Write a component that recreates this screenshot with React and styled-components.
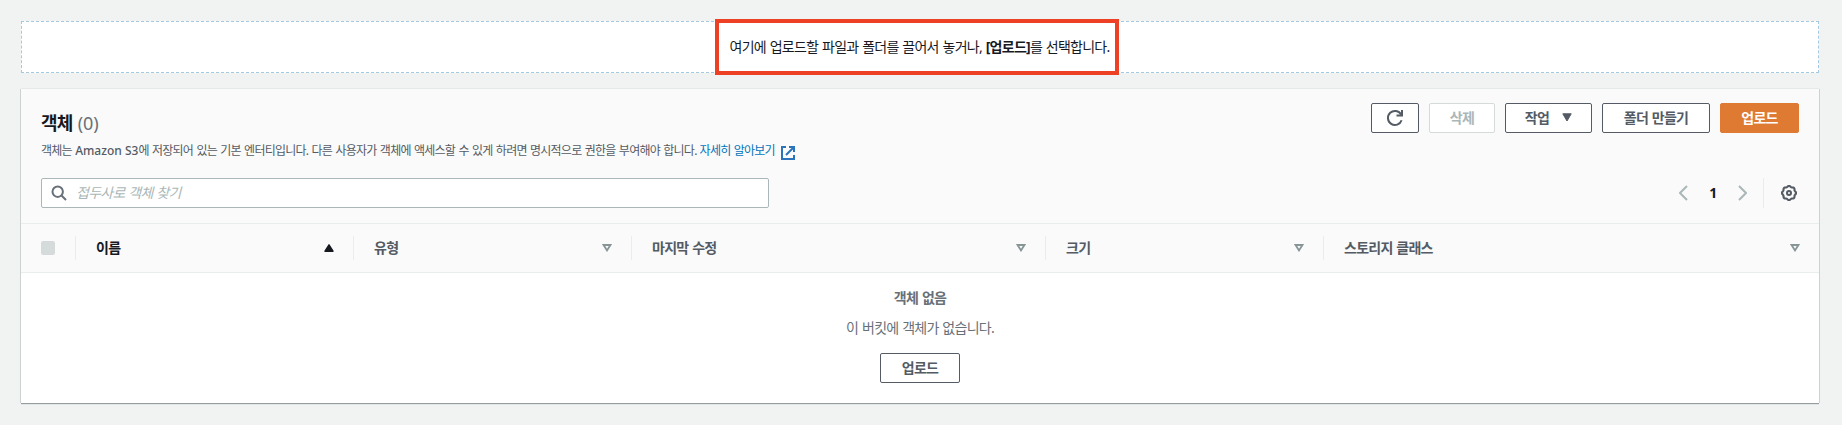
import React from "react";
import styled, { createGlobalStyle } from "styled-components";

const GlobalStyle = createGlobalStyle`
  *, *::before, *::after { box-sizing: border-box; }
  body {
    margin: 0;
    background: #f1f3f3;
    color: #16191f;
    font-family: "Noto Sans", "Noto Sans CJK KR", sans-serif;
    font-size: 14px;
    line-height: 22px;
    letter-spacing: -0.75px;
    word-spacing: 0.9px;
  }
  svg { display: block; flex: none; }
`;

const Page = styled.main`
  min-height: 425px;
  padding: 21px 23px 21px 21px;
`;

const DropZone = styled.section`
  display: flex;
  justify-content: center;
  align-items: center;
  height: 52px;
  background: #fff;
  border: 1px dashed #a2c9e0;
`;

const Callout = styled.div`
  flex: none;
  display: flex;
  justify-content: center;
  align-items: center;
  width: 404px;
  height: 56px;
  margin-right: 6px;
  padding-left: 5px;
  border: 4px solid #ed4025;
  background: #fff;
  white-space: pre;
`;

const Label = styled.span`
  letter-spacing: ${(p) => (p.$track === undefined ? -0.75 : p.$track)}px;
  word-spacing: ${(p) => (p.$track === undefined ? 0.9 : 0)}px;
  font-weight: ${(p) => p.$weight || "inherit"};
  white-space: pre;
`;

const Panel = styled.section`
  margin-top: 16px;
  height: 314px;
  background: #fff;
  box-shadow: 0 1px 0 0 #959d9e, 1px 0 0 0 #ccd1d1, -1px 0 0 0 #ccd1d1, 0 -1px 0 0 #e6e9e9, 0 2px 0 0 #e1e5e5;
`;

const PanelHeader = styled.header`
  height: 135px;
  padding: 14px 20px 15px;
  background: #fafafa;
  border-bottom: 1px solid #eaeded;
`;

const TitleRow = styled.div`
  display: flex;
  justify-content: space-between;
  align-items: flex-start;
  height: 50px;
`;

const Title = styled.h2`
  display: flex;
  gap: 5px;
  margin: 9px 0 0;
  font-size: 18px;
  line-height: 22px;
  font-weight: 700;
`;

const Count = styled.span`
  font-weight: 400;
  letter-spacing: 0;
  color: #687078;
`;

const Description = styled.p`
  display: flex;
  align-items: center;
  margin: 6px 0 0;
  font-size: 12px;
  line-height: 22px;
  color: #545b64;
  white-space: pre;
`;

const Link = styled.a`
  display: flex;
  align-items: center;
  gap: 6px;
  margin-left: 3px;
  color: #0073bb;
  svg { margin-top: 3px; }
`;

const Actions = styled.div`
  display: flex;
  gap: 10px;
`;

const variants = {
  normal: "color: #545b64; background: #fff; border-color: #545b64;",
  disabled: "color: #aab7b8; background: #fff; border-color: #d5dbdb;",
  primary: "color: #fff; background: #df7a33; border-color: #df7a33;",
};

const Button = styled.button`
  display: flex;
  align-items: center;
  justify-content: center;
  gap: 13px;
  width: ${(p) => p.$width}px;
  height: 30px;
  padding: 0 0 1px;
  border: 1px solid;
  border-radius: 2px;
  font: 700 14px/20px "Noto Sans", "Noto Sans CJK KR", sans-serif;
  letter-spacing: -0.75px;
  word-spacing: 0.9px;
  ${(p) => variants[p.$variant || "normal"]}
`;

const FilterRow = styled.div`
  display: flex;
  justify-content: space-between;
  height: 30px;
  margin-top: 25px;
`;

const Search = styled.div`
  display: flex;
  align-items: center;
  gap: 9px;
  width: 728px;
  height: 30px;
  padding-left: 9px;
  background: #fff;
  border: 1px solid #aab7b8;
  border-radius: 2px;
  color: #aab7b8;
  font-style: italic;
`;

const Pager = styled.div`
  display: flex;
  align-items: center;
  height: 30px;
`;

const PageNumber = styled.span`
  width: 50px;
  text-align: center;
  font-weight: 700;
`;

const Settings = styled.div`
  display: flex;
  align-items: center;
  height: 30px;
  margin-left: 16px;
  padding: 0 2px 0 17px;
  border-left: 1px solid #eaeded;
`;

const HeadRow = styled.div`
  display: flex;
  align-items: center;
  height: 49px;
  background: #fafafa;
  border-bottom: 1px solid #eaeded;
`;

const CheckCell = styled.div`
  width: 54px;
  padding-left: 20px;
`;

const Checkbox = styled.div`
  width: 14px;
  height: 14px;
  background: #d5dbdb;
  border-radius: 2px;
`;

const HeadCell = styled.div`
  display: flex;
  align-items: center;
  justify-content: space-between;
  flex: ${(p) => (p.$width ? `none` : 1)};
  width: ${(p) => p.$width}px;
  height: 24px;
  padding: 0 19px 0 20px;
  border-left: 1px solid #eaeded;
  font-weight: 700;
  color: ${(p) => (p.$active ? "#16191f" : "#545b64")};
`;

const Empty = styled.div`
  display: flex;
  flex-direction: column;
  align-items: center;
  padding-top: 14px;
  color: #687078;
`;

const EmptyText = styled.p`
  margin: 0 0 8px;
  font-weight: ${(p) => (p.$bold ? 700 : 400)};
`;

const EmptyAction = styled.div`
  margin-top: 6px;
`;

const SearchIcon = () => (
  <svg width="16" height="16" viewBox="0 0 16 16" fill="none" stroke="#687078" strokeWidth="2">
    <circle cx="6.7" cy="6.7" r="5.2" />
    <path d="M10.5 10.5l4.5 4.5" />
  </svg>
);

const RefreshIcon = () => (
  <svg width="18" height="18" viewBox="0 0 18 18" fill="none" stroke="#545b64" strokeWidth="2">
    <path d="M15.6 11.2A7 7 0 1 1 15.1 5.6" />
    <path d="M16 1v5.5h-5.5" />
  </svg>
);

const ExternalIcon = () => (
  <svg width="14" height="14" viewBox="0 0 14 14" fill="none" stroke="#2b73bb" strokeWidth="2">
    <path d="M5 1H1v12h12V9" />
    <path d="M8 1h5v5M13 1L5 9" />
  </svg>
);

const Chevron = ({ right }) => (
  <svg width="9" height="16" viewBox="0 0 9 16" fill="none" stroke="#aab7b8" strokeWidth="2">
    <path d={right ? "M1 1l7 7-7 7" : "M8 1L1 8l7 7"} />
  </svg>
);

const gearPoints = Array.from({ length: 64 }, (_, i) => {
  const a = (i / 64) * Math.PI * 2;
  const r = 6.6 + 0.5 * Math.cos(a * 8);
  return `${(8 + r * Math.cos(a)).toFixed(2)},${(8 + r * Math.sin(a)).toFixed(2)}`;
}).join(" ");

const GearIcon = () => (
  <svg width="16" height="16" viewBox="0 0 16 16" fill="none" stroke="#545b64" strokeWidth="2">
    <polygon points={gearPoints} strokeWidth="2.1" />
    <circle cx="8" cy="8" r="2" />
  </svg>
);

const SortIcon = ({ active }) =>
  active ? (
    <svg width="10" height="8" viewBox="0 0 10 8">
      <path d="M5 0.8L9 7.2H1z" fill="#16191f" stroke="#16191f" strokeWidth="1.4" strokeLinejoin="round" />
    </svg>
  ) : (
    <svg width="10" height="8" viewBox="0 0 10 8">
      <path d="M1.6 1h6.8L5 6.4z" fill="none" stroke="#879596" strokeWidth="1.8" />
    </svg>
  );

const CaretIcon = () => (
  <svg width="10" height="9" viewBox="0 0 10 9">
    <path d="M0.8 0.8h8.4L5 8z" fill="#545b64" stroke="#545b64" strokeWidth="1" strokeLinejoin="round" />
  </svg>
);

const columns = [
  { name: "이름", width: 278, active: true },
  { name: "유형", width: 278 },
  { name: "마지막 수정", width: 414 },
  { name: "크기", width: 278 },
  { name: "스토리지 클래스" },
];

export default function App() {
  return (
    <Page>
      <GlobalStyle />
      <DropZone>
        <Callout>
          <Label>
            여기에 업로드할 파일과 폴더를 끌어서 놓거나, <b>[업로드]</b>를 선택합니다.
          </Label>
        </Callout>
      </DropZone>
      <Panel>
        <PanelHeader>
          <TitleRow>
            <div>
              <Title>
                객체 <Count>(0)</Count>
              </Title>
              <Description>
                <Label>객체는 </Label>
                <Label $track={0} $weight={500}>Amazon S3</Label>
                <Label>에 저장되어 있는 기본 엔터티입니다. 다른 사용자가 객체에 액세스할 수 있게 하려면 명시적으로 권한을 부여해야 합니다.</Label>
                <Link>
                  <Label>자세히 알아보기</Label>
                  <ExternalIcon />
                </Link>
              </Description>
            </div>
            <Actions>
              <Button $width={48}><RefreshIcon /></Button>
              <Button $width={66} $variant="disabled">삭제</Button>
              <Button $width={87}>작업 <CaretIcon /></Button>
              <Button $width={108}>폴더 만들기</Button>
              <Button $width={79} $variant="primary">업로드</Button>
            </Actions>
          </TitleRow>
          <FilterRow>
            <Search>
              <SearchIcon />
              <Label>접두사로 객체 찾기</Label>
            </Search>
            <Pager>
              <Chevron />
              <PageNumber>1</PageNumber>
              <Chevron right />
              <Settings><GearIcon /></Settings>
            </Pager>
          </FilterRow>
        </PanelHeader>
        <HeadRow>
          <CheckCell><Checkbox /></CheckCell>
          {columns.map((c) => (
            <HeadCell key={c.name} $width={c.width} $active={c.active}>
              <Label>{c.name}</Label>
              <SortIcon active={c.active} />
            </HeadCell>
          ))}
        </HeadRow>
        <Empty>
          <EmptyText $bold>객체 없음</EmptyText>
          <EmptyText>이 버킷에 객체가 없습니다.</EmptyText>
          <EmptyAction>
            <Button $width={80}>업로드</Button>
          </EmptyAction>
        </Empty>
      </Panel>
    </Page>
  );
}
